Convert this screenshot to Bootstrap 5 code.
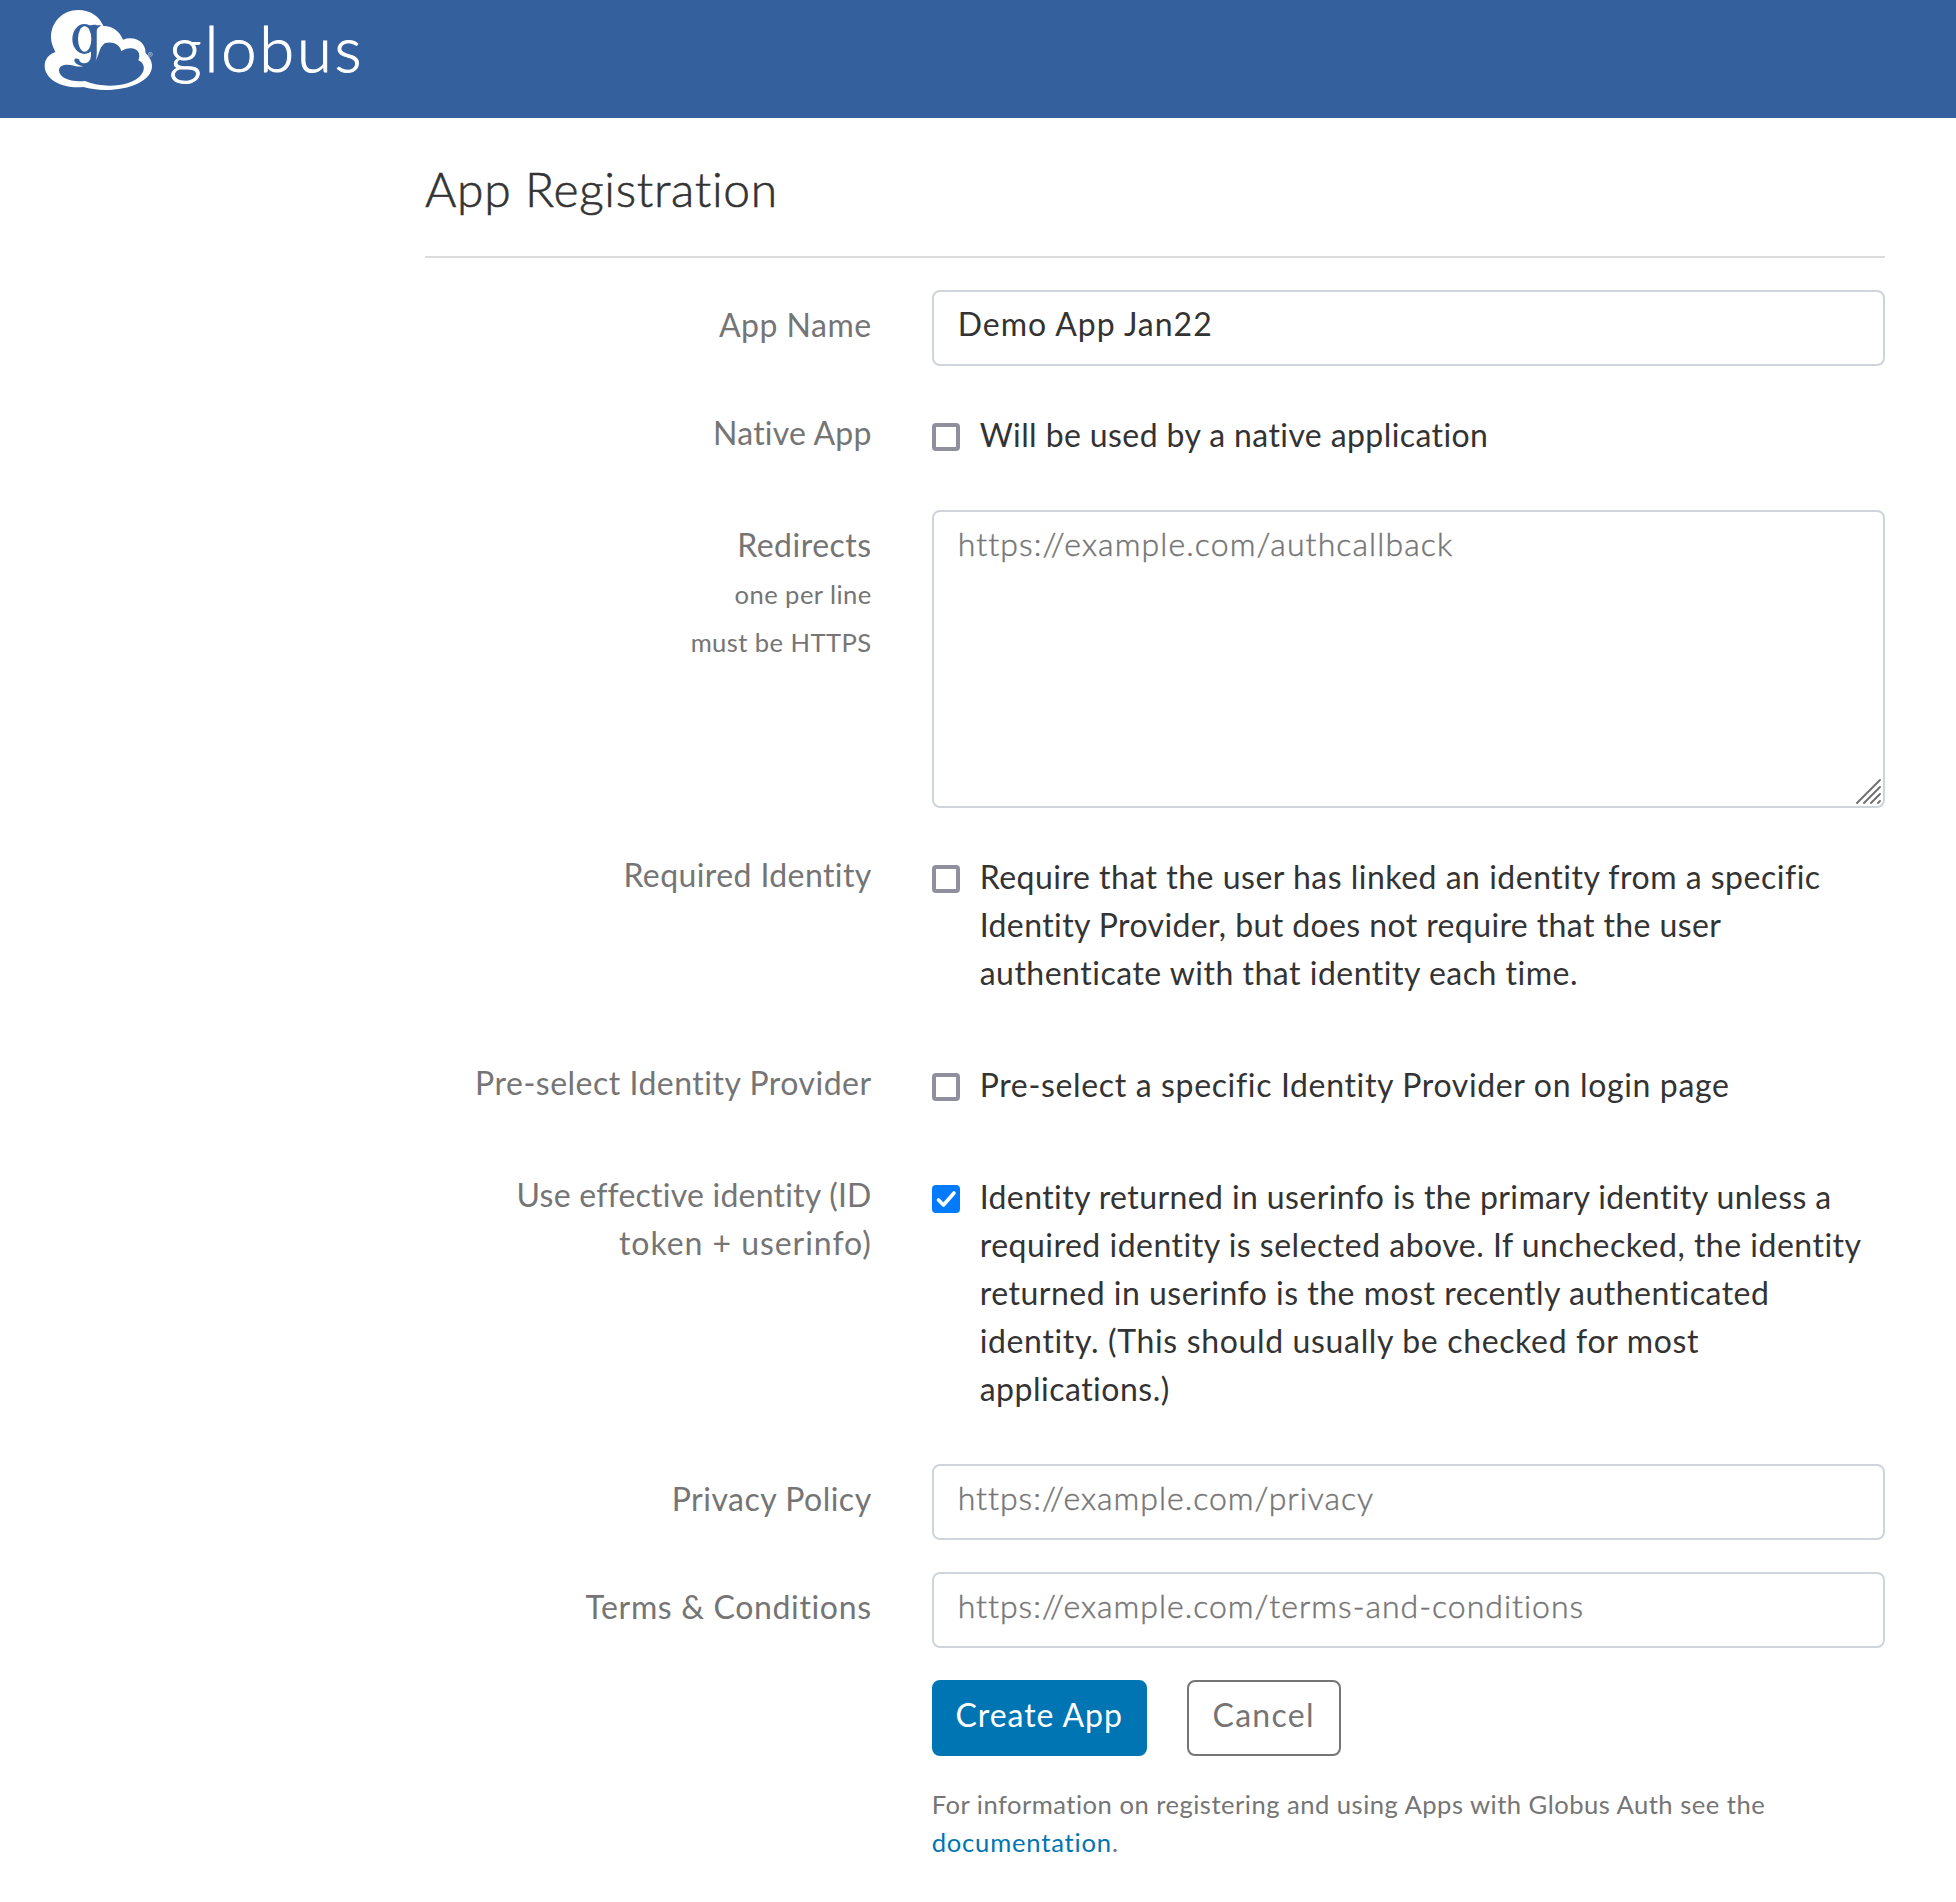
<!DOCTYPE html>
<html lang="en">
<head>
<meta charset="utf-8">
<title>Globus – App Registration</title>
<link href="https://cdn.jsdelivr.net/npm/bootstrap@5.3.0/dist/css/bootstrap.min.css" rel="stylesheet">
<style>
  body { font-family: Lato, "Open Sans", sans-serif; font-size: 32px; line-height: 48px; color: #333; letter-spacing: .5px; }
  .topbar { background: #34609e; height: 118px; padding-left: 30px; }
  .page { width: 1520px; margin-left: 395px; --bs-gutter-x: 60px; padding: 0; }
  .page .row { --bs-gutter-x: 60px; margin: 0 0 32px; }
  .page-title { font-size: 48px; font-weight: 300; line-height: 58px; letter-spacing: .7px; -webkit-text-stroke: .6px #333; margin: 0 30px 32px; padding: 42px 0 38px; border-bottom: 2px solid #dcdcdc; }
  .field-label { color: #757575; text-align: right; padding-top: 11px; }
  .field-label small { display: block; font-size: 25.6px; line-height: 48px; letter-spacing: .42px; }
  .field-label small:first-of-type { margin-top: 1px; }
  .form-control { height: 76px; padding: 7px 24px 17px; border: 2px solid #ced4da; border-radius: 8px; font-size: 32px; line-height: 48px; color: #333; letter-spacing: 1px; }
  .form-control::placeholder { color: #757575; font-weight: 300; letter-spacing: 1px; -webkit-text-stroke: .45px #757575; }
  textarea.form-control { height: 298px; padding-top: 8px; resize: none; display: block; }
  textarea.form-control::placeholder { letter-spacing: 1.1px; }
  .grip { position: absolute; right: 33px; bottom: 3px; width: 26px; height: 26px; }
  .check-row { padding-top: 13px; padding-bottom: 19px; gap: 20px; }
  .form-check-input[type=checkbox] { flex: none; width: 28px; height: 28px; margin: 12px 0 0; border: 4px solid #8f8f9d; border-radius: 4px; }
  .form-check-input[type=checkbox]:checked { background-color: #007bff; border-color: #007bff; background-image: none; }
  .tick { position: absolute; left: 30px; top: 25px; width: 28px; height: 28px; pointer-events: none; }
  .btn { height: 76px; padding: 9px 0 15px; border-width: 2px; border-radius: 8px; font-size: 32px; line-height: 48px; }
  .btn-create { width: 215px; background: #0075b4; border-color: #0075b4; color: #fff; letter-spacing: .95px; }
  .btn-cancel { width: 154px; border-color: #757575; color: #757575; letter-spacing: 1.3px; }
  .footnote { margin-top: 29px; font-size: 25.6px; line-height: 38.4px; color: #757575; letter-spacing: .48px; }
  .footnote a { color: #0075b4; text-decoration: none; letter-spacing: .8px; }
  .actions { gap: 40px; }
  .wide { letter-spacing: .65px; }
  .tight { letter-spacing: .4px; }
  .tighter { letter-spacing: .22px; }
</style>
</head>
<body>
<header class="topbar">
  <svg width="350" height="118" viewBox="0 0 1050 354" class="d-block" role="img" aria-label="globus">
    <path fill="#fff" d="M76 156C68 140 63 128 63 112C63 66 98 30 145 30C181 30 209 50 220 78C250 78 270 96 279 119C310 107 347 121 347 160C358 170 366 184 366 198C366 242 300 270 226 270C200 270 180 266 160 261C100 267 44 240 44 197C44 177 58 162 76 156Z"/>
    <path fill="#34609e" d="M196 184C208 165 207 142 224 130C244 123 270 131 274 154C292 139 322 143 327 160C329 170 327 177 325 181C345 190 346 210 333 225C304 261 218 266 165 243C125 248 87 235 87 211C87 193 112 191 132 197C144 200 152 200 160 199C148 197 133 191 133 181C133 175 139 174 147 178C148 185 153 190 162 190C178 190 183 179 183 160V80C184 75 188 74 194 74H213C207 81 201 83 200 94V160C200 171 199 178 196 184Z"/>
    <ellipse cx="163" cy="117" rx="36" ry="45" fill="#34609e"/>
    <path fill="#fff" d="M199 90V68H212L222 80L222 130L199 160Z"/>
    <path fill="#34609e" d="M178 76H215C207 81 201 83 200 94V160H184Z"/>
    <ellipse cx="164" cy="117" rx="20" ry="38" fill="#fff"/>
    <circle cx="361" cy="163" r="6" fill="none" stroke="#c9d6e8" stroke-width="2"/>
    <path d="M359 166V160H362L363 163H359M361 163L364 166" fill="none" stroke="#c9d6e8" stroke-width="1"/>
    <text x="418" y="216" fill="#fff" font-family="Lato" font-weight="300" font-size="190" textLength="577" stroke="#fff" stroke-width="3">globus</text>
  </svg>
</header>

<main class="page">
  <h1 class="page-title">App Registration</h1>
  <form>
    <div class="row">
      <label class="col-4 field-label" for="name">App Name</label>
      <div class="col-8"><input id="name" class="form-control" value="Demo App Jan22"></div>
    </div>
    <div class="row">
      <label class="col-4 field-label tighter" for="native">Native App</label>
      <div class="col-8 d-flex check-row"><input id="native" type="checkbox" class="form-check-input"><div class="tight">Will be used by a native application</div></div>
    </div>
    <div class="row">
      <label class="col-4 field-label" for="redirects">Redirects<small>one per line</small><small>must be HTTPS</small></label>
      <div class="col-8 position-relative">
        <textarea id="redirects" class="form-control" placeholder="https://example.com/authcallback"></textarea>
        <svg class="grip" viewBox="0 0 26 26" stroke="#6c6c6c" stroke-width="1.8" stroke-linecap="round"><path d="M1 24L24 1M8 24L24 8M15 24L24 15M22 24L24 22"/></svg>
      </div>
    </div>
    <div class="row">
      <label class="col-4 field-label tight" for="required">Required Identity</label>
      <div class="col-8 d-flex check-row"><input id="required" type="checkbox" class="form-check-input"><div>Require that the user has linked an identity from a specific<br><span class="tight">Identity Provider, but does not require that the user</span><br>authenticate with that identity each time.</div></div>
    </div>
    <div class="row">
      <label class="col-4 field-label" for="preselect">Pre-select Identity Provider</label>
      <div class="col-8 d-flex check-row"><input id="preselect" type="checkbox" class="form-check-input"><div class="wide">Pre-select a specific Identity Provider on login page</div></div>
    </div>
    <div class="row">
      <label class="col-4 field-label" for="effective"><span class="tighter">Use effective identity (ID</span><br><span style="letter-spacing:.95px">token + userinfo)</span></label>
      <div class="col-8 d-flex check-row position-relative"><input id="effective" type="checkbox" class="form-check-input" checked><svg class="tick" viewBox="0 0 28 28" fill="none" stroke="#fff" stroke-width="3.6" stroke-linecap="round" stroke-linejoin="round"><path d="M6.5 15L11.5 20L22 8"/></svg><div><span class="tight">Identity returned in userinfo is the primary identity unless a</span><br>required identity is selected above. If unchecked, the identity<br>returned in userinfo is the most recently authenticated<br><span class="wide">identity. (This should usually be checked for most</span><br>applications.)</div></div>
    </div>
    <div class="row">
      <label class="col-4 field-label" for="privacy">Privacy Policy</label>
      <div class="col-8"><input id="privacy" class="form-control" placeholder="https://example.com/privacy"></div>
    </div>
    <div class="row">
      <label class="col-4 field-label wide" for="terms">Terms &amp; Conditions</label>
      <div class="col-8"><input id="terms" class="form-control" placeholder="https://example.com/terms-and-conditions"></div>
    </div>
    <div class="row mb-0">
      <div class="col-8 offset-4">
        <div class="d-flex actions"><button type="button" class="btn btn-create">Create App</button><button type="button" class="btn btn-cancel">Cancel</button></div>
        <p class="footnote mb-0">For information on registering and using Apps with Globus Auth see the<br><a href="#">documentation</a>.</p>
      </div>
    </div>
  </form>
</main>
<script src="https://cdn.jsdelivr.net/npm/bootstrap@5.3.0/dist/js/bootstrap.bundle.min.js"></script>
</body>
</html>
